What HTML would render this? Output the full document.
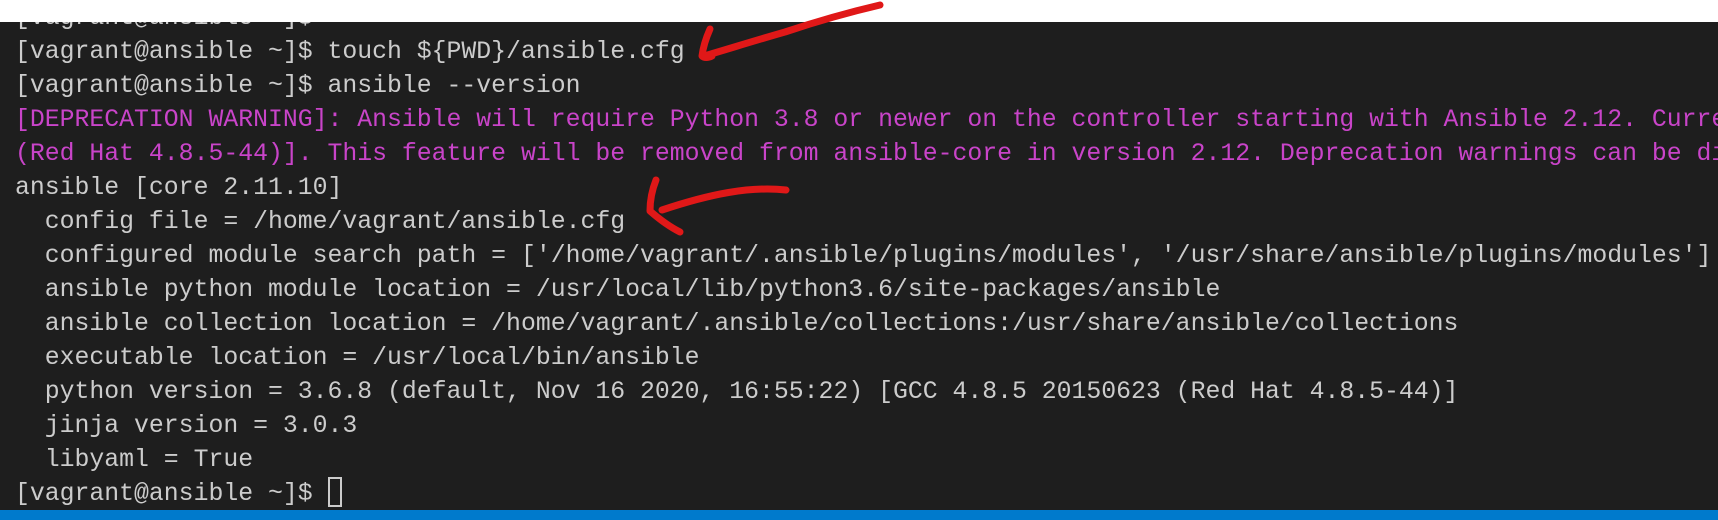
<!DOCTYPE html>
<html><head><meta charset="utf-8"><style>
html,body{margin:0;padding:0;width:1718px;height:520px;overflow:hidden;background:#fff;position:relative}
#term{position:absolute;left:0;top:22px;width:1718px;height:488px;background:#1e1e1e}
#bar{position:absolute;left:0;top:510px;width:1718px;height:10px;background:#007acc}
#txt{position:absolute;left:15px;top:1px;font-family:"Liberation Mono",monospace;font-size:24.8px;line-height:34px;color:#cccccc;white-space:pre}
.m{color:#c944c9}
#cur{display:inline-block;width:14px;height:30px;border:2px solid #cccccc;vertical-align:-7px;box-sizing:border-box}
#clip{position:absolute;left:0;top:0;width:1718px;height:510px;overflow:hidden}
#white{position:absolute;left:0;top:0;width:1718px;height:22px;background:#fff}
svg{position:absolute;left:0;top:0}
</style></head><body>
<div id="term"></div>
<div id="clip"><div id="txt">[vagrant@ansible ~]$
[vagrant@ansible ~]$ touch ${PWD}/ansible.cfg
[vagrant@ansible ~]$ ansible --version
<span class="m">[DEPRECATION WARNING]: Ansible will require Python 3.8 or newer on the controller starting with Ansible 2.12. Current version: 3.6.8</span>
<span class="m">(Red Hat 4.8.5-44)]. This feature will be removed from ansible-core in version 2.12. Deprecation warnings can be disabled</span>
ansible [core 2.11.10]
  config file = /home/vagrant/ansible.cfg
  configured module search path = ['/home/vagrant/.ansible/plugins/modules', '/usr/share/ansible/plugins/modules']
  ansible python module location = /usr/local/lib/python3.6/site-packages/ansible
  ansible collection location = /home/vagrant/.ansible/collections:/usr/share/ansible/collections
  executable location = /usr/local/bin/ansible
  python version = 3.6.8 (default, Nov 16 2020, 16:55:22) [GCC 4.8.5 20150623 (Red Hat 4.8.5-44)]
  jinja version = 3.0.3
  libyaml = True
[vagrant@ansible ~]$ <span id="cur"></span></div></div>
<div id="white"></div>
<div id="bar"></div>
<svg width="1718" height="520" viewBox="0 0 1718 520">
<g fill="none" stroke="#e01818" stroke-width="7" stroke-linecap="round" stroke-linejoin="round">
<path d="M880 5 C850 12 815 22 785 32 C750 42 725 50 704 56"/>
<path d="M710 29 C706 38 703 48 702 56 C704 58 708 58 712 56"/>
<path d="M786 190 C750 186 710 194 662 210"/>
<path d="M656 180 C652 190 650 200 650 211 C658 218 668 226 680 232"/>
</g>
</svg>
</body></html>
